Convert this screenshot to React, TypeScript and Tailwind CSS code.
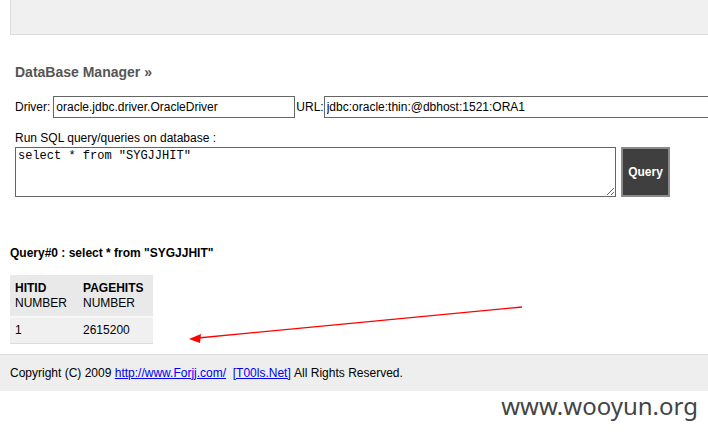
import React from 'react';

const Arrow = () => (
  <svg className="absolute left-0 top-0 pointer-events-none" width="708" height="435">
    <line x1="522" y1="307" x2="198" y2="338" stroke="#ff0000" strokeWidth="1.3" />
    <polygon points="189,339 201,334 200,343" fill="#ff0000" />
  </svg>
);

export default function App() {
  return (
    <div
      className="relative w-[708px] h-[435px] overflow-hidden bg-white text-[12px] text-black"
      style={{ fontFamily: '"Liberation Sans", Arial, sans-serif' }}
    >
      <div className="ml-[10px] h-[35px] bg-[#f0f0f0] border-l border-b border-[#dddddd]" />

      <div className="pl-[15px]">
        <h2 className="mt-[30px] text-[14px] leading-[15px] font-bold text-[#555555]">
          DataBase Manager &raquo;
        </h2>

        <div className="mt-[16px] flex items-center whitespace-nowrap">
          <span className="mr-[3px] shrink-0">Driver:</span>
          <input
            readOnly
            value="oracle.jdbc.driver.OracleDriver"
            className="w-[242px] h-[22px] border border-[#666666] px-[2px] text-[12px] outline-none shrink-0"
          />
          <span className="ml-[1px] shrink-0">URL:</span>
          <input
            readOnly
            value="jdbc:oracle:thin:@dbhost:1521:ORA1"
            className="w-[400px] h-[22px] border border-[#666666] px-[2px] text-[12px] outline-none shrink-0"
          />
        </div>

        <p className="mt-[12px] leading-[16px]">Run SQL query/queries on database :</p>

        <div className="mt-[1px] flex items-start">
          <textarea
            readOnly
            value={'select * from "SYGJJHIT"'}
            className="w-[601px] h-[50px] border border-[#666666] px-[2px] py-[1px] text-[12px] leading-[14px] outline-none"
            style={{ fontFamily: '"Liberation Mono", "Courier New", monospace' }}
          />
          <button className="ml-[5px] w-[49px] h-[50px] bg-[#3f3f3f] border-[2px] border-[#8a8a8a] text-white font-bold text-[12px]">
            Query
          </button>
        </div>
      </div>

      <div className="pl-[10px]">
        <p className="mt-[49px] font-bold leading-[15px]">Query#0 : select * from "SYGJJHIT"</p>

        <table className="mt-[14px] border-collapse">
          <thead>
            <tr className="bg-[#e9e9e9] border-b-[2px] border-[#f8f8f8]">
              <td className="pl-[5px] pr-[16px] pt-[6px] pb-[5px] leading-[15px] align-top">
                <div className="font-bold">HITID</div>
                <div>NUMBER</div>
              </td>
              <td className="pl-[0px] pr-[10px] pt-[6px] pb-[5px] leading-[15px] align-top">
                <div className="font-bold">PAGEHITS</div>
                <div>NUMBER</div>
              </td>
            </tr>
          </thead>
          <tbody>
            <tr className="bg-[#f0f0f0] border-b border-[#dcdcdc]">
              <td className="pl-[5px] h-[26px] leading-[15px]">1</td>
              <td className="h-[26px] leading-[15px]">2615200</td>
            </tr>
          </tbody>
        </table>
      </div>

      <div className="mt-[10px] h-[37px] bg-[#eeeeee] border-t border-[#dddddd] flex items-center pl-[10px]">
        Copyright (C) 2009&nbsp;
        <a href="#" className="text-[#0000ee] underline">http://www.Forjj.com/</a>
        &nbsp;&nbsp;
        <a href="#" className="text-[#0000ee] underline">[T00ls.Net]</a>
        &nbsp;All Rights Reserved.
      </div>

      <div className="flex justify-end pr-[10px]">
        <span
          className="text-[24px] leading-[30px] text-[#444444]"
          style={{ fontFamily: '"Noto Sans", "Open Sans", sans-serif' }}
        >
          www.wooyun.org
        </span>
      </div>

      <Arrow />
    </div>
  );
}
